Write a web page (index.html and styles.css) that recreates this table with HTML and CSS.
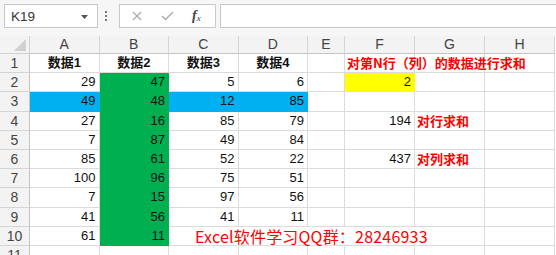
FILE: index.html
```html
<!DOCTYPE html>
<html>
<head>
<meta charset="utf-8">
<link rel="stylesheet" href="styles.css">
</head>
<body>
<div class="app">
  <div class="toolbar">
    <div class="namebox"><span class="nb-text">K19</span><svg class="nb-arrow" width="7" height="4" viewBox="0 0 7 4"><polygon points="0,0 7,0 3.5,4" fill="#555"/></svg></div>
    <div class="dots"><span></span><span></span><span></span></div>
    <div class="fxbox">
      <svg class="ic-x" width="10" height="10" viewBox="0 0 10 10"><path d="M1 1 L9 9 M9 1 L1 9" stroke="#aaaaaa" stroke-width="1.3" fill="none"/></svg>
      <svg class="ic-ok" width="13" height="10" viewBox="0 0 13 10"><path d="M1 5 L4.5 8.5 L12 1" stroke="#aaaaaa" stroke-width="1.4" fill="none"/></svg>
      <span class="ic-fx"><i>f</i><sub>x</sub></span>
    </div>
    <div class="formula"></div>
  </div>
  <div class="sheet">
    <div class="grid">
      <div class="corner"><svg width="12" height="12" viewBox="0 0 12 12"><polygon points="12,0 12,12 0,12" fill="#d0d0d0"/></svg></div>
      <div class="ch">A</div><div class="ch">B</div><div class="ch">C</div><div class="ch">D</div><div class="ch">E</div><div class="ch">F</div><div class="ch">G</div><div class="ch">H</div>

      <div class="rh">1</div><div class="c hd">数据1</div><div class="c hd">数据2</div><div class="c hd">数据3</div><div class="c hd">数据4</div><div class="c"></div><div class="c red lt">对第N行（列）的数据进行求和</div><div class="c"></div><div class="c"></div>

      <div class="rh">2</div><div class="c n">29</div><div class="c n g">47</div><div class="c n">5</div><div class="c n">6</div><div class="c"></div><div class="c n y">2</div><div class="c"></div><div class="c"></div>

      <div class="rh">3</div><div class="c n b">49</div><div class="c n g">48</div><div class="c n b">12</div><div class="c n b">85</div><div class="c"></div><div class="c"></div><div class="c"></div><div class="c"></div>

      <div class="rh">4</div><div class="c n">27</div><div class="c n g">16</div><div class="c n">85</div><div class="c n">79</div><div class="c"></div><div class="c n">194</div><div class="c red lt">对行求和</div><div class="c"></div>

      <div class="rh">5</div><div class="c n">7</div><div class="c n g">87</div><div class="c n">49</div><div class="c n">84</div><div class="c"></div><div class="c"></div><div class="c"></div><div class="c"></div>

      <div class="rh">6</div><div class="c n">85</div><div class="c n g">61</div><div class="c n">52</div><div class="c n">22</div><div class="c"></div><div class="c n">437</div><div class="c red lt">对列求和</div><div class="c"></div>

      <div class="rh">7</div><div class="c n">100</div><div class="c n g">96</div><div class="c n">75</div><div class="c n">51</div><div class="c"></div><div class="c"></div><div class="c"></div><div class="c"></div>

      <div class="rh">8</div><div class="c n">7</div><div class="c n g">15</div><div class="c n">97</div><div class="c n">56</div><div class="c"></div><div class="c"></div><div class="c"></div><div class="c"></div>

      <div class="rh">9</div><div class="c n">41</div><div class="c n g">56</div><div class="c n">41</div><div class="c n">11</div><div class="c"></div><div class="c"></div><div class="c"></div><div class="c"></div>

      <div class="rh">10</div><div class="c n">61</div><div class="c n g">11</div><div class="c"></div><div class="c"></div><div class="c"></div><div class="c"></div><div class="c"></div><div class="c"></div>

      <div class="rh">11</div><div class="c"></div><div class="c"></div><div class="c"></div><div class="c"></div><div class="c"></div><div class="c"></div><div class="c"></div><div class="c"></div>
    </div>
    <div class="watermark">Excel软件学习QQ群：28246933</div>
  </div>
</div>
</body>
</html>
```

FILE: styles.css
```css
* { box-sizing: border-box; }
html, body { margin: 0; padding: 0; }
body {
  width: 556px;
  height: 255px;
  overflow: hidden;
  background: #ffffff;
  font-family: "Liberation Sans", "Noto Sans CJK SC", sans-serif;
  color: #222;
}
.app { width: 556px; height: 255px; display: flex; flex-direction: column; }

.toolbar {
  height: 36px;
  flex: none;
  background: #f6f6f6;
  display: flex;
  align-items: flex-start;
  padding-top: 4px;
}
.namebox {
  margin-left: 4px;
  width: 94px;
  height: 24px;
  background: #fff;
  border: 1px solid #c8c8c8;
  display: flex;
  align-items: center;
  justify-content: space-between;
  padding: 0 9px 0 6px;
  font-size: 13.5px;
  color: #333;
}
.nb-arrow { margin-top: 1px; }
.dots {
  margin-left: 7px;
  width: 3px;
  height: 24px;
  display: flex;
  flex-direction: column;
  justify-content: center;
  gap: 2px;
}
.dots span { width: 2px; height: 2px; background: #777; display: block; }
.fxbox {
  margin-left: 11px;
  width: 97px;
  height: 24px;
  background: #fff;
  border: 1px solid #c8c8c8;
  display: flex;
  align-items: center;
  padding-left: 12px;
}
.ic-x { margin-right: 19px; }
.ic-ok { margin-right: 18px; }
.ic-fx {
  font-family: "Liberation Serif", serif;
  font-size: 14px;
  color: #444;
  line-height: 1;
}
.ic-fx i { font-style: italic; font-weight: bold; }
.ic-fx sub { font-size: 9px; font-style: italic; vertical-align: -1px; }
.formula {
  margin-left: 4px;
  flex: 1;
  height: 24px;
  background: #fff;
  border: 1px solid #c8c8c8;
  border-right: none;
}

.sheet { position: relative; flex: 1; overflow: hidden; }
.grid {
  display: grid;
  grid-template-columns: 30px 69.5px 69.5px 69.5px 69.5px 37px 70px 70px 70px;
  grid-template-rows: 18px repeat(11, 19.2px);
}
.corner {
  background: #f3f3f3;
  border-right: 1px solid #d0d0d0;
  border-bottom: 1px solid #d0d0d0;
  display: flex;
  align-items: flex-end;
  justify-content: flex-end;
  padding: 0 3px 2px 0;
}
.ch {
  background: #f3f3f3;
  border-right: 1px solid #d4d4d4;
  border-bottom: 1px solid #c4c4c4;
  text-align: center;
  font-size: 14px;
  line-height: 17px;
  color: #444;
}
.rh {
  background: #f3f3f3;
  border-right: 1px solid #c4c4c4;
  border-bottom: 1px solid #d4d4d4;
  text-align: center;
  font-size: 14px;
  line-height: 18px;
  color: #444;
}
.c {
  border-right: 1px solid #dadada;
  border-bottom: 1px solid #dadada;
  font-size: 13px;
  line-height: 18px;
  white-space: nowrap;
  color: #111;
  min-width: 0;
}
.hd { font-weight: bold; text-align: center; }
.n { text-align: right; padding-right: 3px; }
.lt { text-align: left; padding-left: 2px; overflow: visible; position: relative; z-index: 1; }
.red { color: #ff0000; font-weight: bold; font-family: "Noto Sans CJK SC", sans-serif; }
.g { background: #00b050; border-color: #00b050; }
.b { background: #00b0f0; border-color: #00b0f0; }
.y { background: #ffff00; border-color: #ffff00; }

.watermark {
  position: absolute;
  left: 186px;
  top: 191px;
  width: 246px;
  height: 18px;
  background: #fff;
  color: #ff0000;
  font-family: "Noto Sans CJK SC", sans-serif;
  font-size: 16px;
  letter-spacing: 0.2px;
  line-height: 18px;
  padding-left: 9px;
  white-space: nowrap;
}
```
